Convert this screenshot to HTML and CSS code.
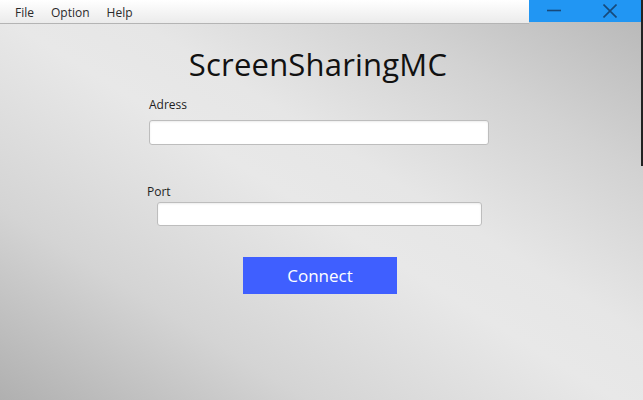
FILE: index.html
```html
<!DOCTYPE html>
<html lang="en">
<head>
  <meta charset="UTF-8">
  <title>ScreenSharingMC</title>
  <link rel="stylesheet" href="styles.css">
</head>
<body>
  <div class="window">
    <div class="app">
      <div class="top-bar">
        <ul class="menu">
          <li class="menu-item">File</li>
          <li class="menu-item">Option</li>
          <li class="menu-item">Help</li>
        </ul>
        <div class="controls">
          <svg class="ctrl ctrl-min" viewBox="0 0 14 14">
            <path d="M0 7.5h14" />
          </svg>
          <svg class="ctrl ctrl-close" viewBox="0 0 14 14">
            <path d="M0.5 0.5l13 13M13.5 0.5l-13 13" />
          </svg>
        </div>
      </div>

      <div class="content">
        <form class="form">
          <h1 class="title">ScreenSharingMC</h1>

          <label class="label label-address" for="address">Adress</label>
          <input id="address" class="field field-address" type="text">

          <label class="label label-port" for="port">Port</label>
          <input id="port" class="field field-port" type="text">

          <button class="connect" type="button">Connect</button>
        </form>
      </div>
    </div>
    <div class="edge"></div>
  </div>
</body>
</html>
```

FILE: styles.css
```css
body {
  margin: 0;
  padding: 0;
  font-family: "Open Sans", "Noto Sans", sans-serif;
  color: #222;
}
.window {
  width: 643px;
  height: 400px;
  display: flex;
  overflow: hidden;
  background: linear-gradient(to top right, #b0b0b0 0%, #d4d4d4 24%, #e8e8e8 48%, #e6e6e6 58%, #d2d2d2 78%, #b6b6b6 100%);
}
.app {
  flex: 1;
  display: flex;
  flex-direction: column;
}
.edge {
  width: 2px;
  background: linear-gradient(to bottom, #222 0, #222 166px, transparent 166px);
}

/* menu bar + window buttons */
.top-bar {
  display: flex;
  align-items: flex-start;
}
.menu {
  flex: 1;
  display: flex;
  margin: 0;
  padding: 0 0 0 15px;
  height: 23px;
  list-style: none;
  border-bottom: 1px solid #b4b4b4;
  background: linear-gradient(to bottom, #ffffff, #ebebeb);
}
.menu-item {
  font-size: 12px;
  line-height: 26px;
  color: #2a2a2a;
  margin-right: 17px;
}
.controls {
  width: 112px;
  height: 22px;
  display: flex;
  align-items: center;
  background: #2196f3;
}
.ctrl {
  width: 14px;
  height: 14px;
  fill: none;
  stroke: #17497a;
  stroke-width: 1.6;
}
.ctrl-min {
  margin-left: 18px;
  margin-top: -3px;
}
.ctrl-close {
  margin-left: 42px;
}

/* login form */
.content {
  flex: 1;
}
.form {
  width: 340px;
  margin: 0 0 0 149px;
  display: flex;
  flex-direction: column;
  align-items: flex-start;
}
.title {
  align-self: center;
  margin: 20px 0 0 -2px;
  font-size: 31px;
  line-height: 40px;
  font-weight: normal;
  color: #111;
  letter-spacing: 0.2px;
}
.label {
  font-size: 12px;
  line-height: 16px;
  color: #1e1e1e;
}
.label-address {
  margin-top: 13px;
}
.label-port {
  margin-top: 39px;
  margin-left: -2px;
}
.field {
  box-sizing: border-box;
  height: 25px;
  margin: 0;
  padding: 0 6px;
  border: 1px solid #bdbdbd;
  border-radius: 3px;
  background: #fff;
  box-shadow: inset 0 1px 2px rgba(0, 0, 0, 0.08);
  font: inherit;
}
.field-address {
  width: 340px;
  margin-top: 7px;
}
.field-port {
  width: 325px;
  height: 24px;
  margin-top: 2px;
  margin-left: 8px;
}
.connect {
  width: 154px;
  height: 37px;
  margin: 31px 0 0 94px;
  border: none;
  padding: 0;
  background: #3f5fff;
  color: #fff;
  font-family: inherit;
  font-size: 17px;
}
```
